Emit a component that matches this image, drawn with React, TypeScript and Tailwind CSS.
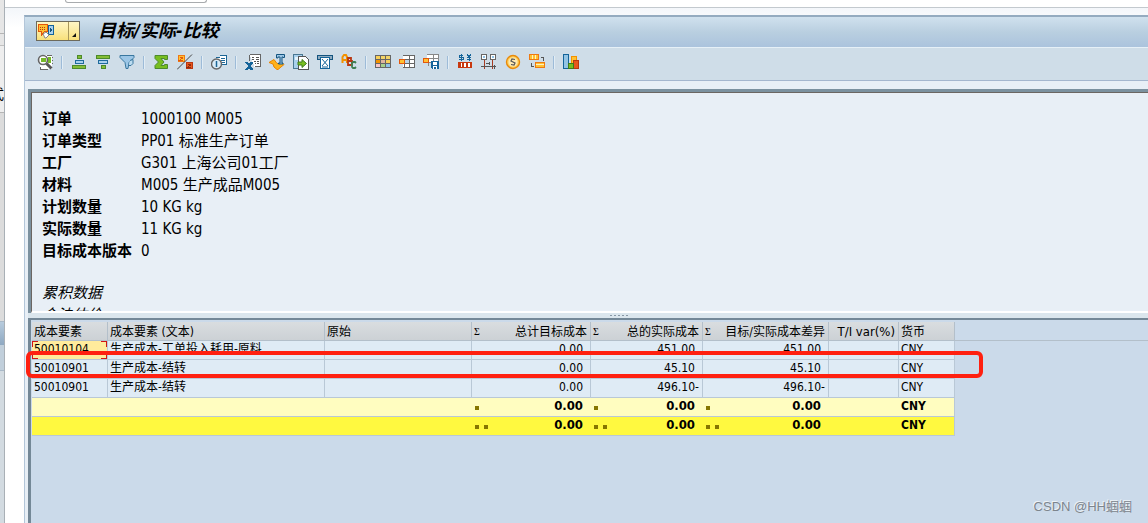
import type { ReactNode } from 'react';
import clsx from 'clsx';

interface OrderField {
  label: string;
  value: string;
}

interface CostRow {
  element: string;
  text: string;
  target: string;
  actual: string;
  variance: string;
  currency: string;
}

const orderFields: OrderField[] = [
  { label: '订单', value: '1000100 M005' },
  { label: '订单类型', value: 'PP01 标准生产订单' },
  { label: '工厂', value: 'G301 上海公司01工厂' },
  { label: '材料', value: 'M005 生产成品M005' },
  { label: '计划数量', value: '10 KG kg' },
  { label: '实际数量', value: '11 KG kg' },
  { label: '目标成本版本', value: '0' },
];

const costRows: CostRow[] = [
  { element: '50010104', text: '生产成本-工单投入耗用-原料', target: '0.00', actual: '451.00', variance: '451.00', currency: 'CNY' },
  { element: '50010901', text: '生产成本-结转', target: '0.00', actual: '45.10', variance: '45.10', currency: 'CNY' },
  { element: '50010901', text: '生产成本-结转', target: '0.00', actual: '496.10-', variance: '496.10-', currency: 'CNY' },
];

const totalRows = [
  { level: 1, bg: 'bg-[#fffdc0]' },
  { level: 2, bg: 'bg-[#fff940]' },
];

function Icon({ children }: { children: ReactNode }) {
  return (
    <svg className="block h-4 w-4" viewBox="0 0 16 16" fill="none" shapeRendering="crispEdges" aria-hidden="true">
      {children}
    </svg>
  );
}

const toolGroups: { name: string; icon: ReactNode }[][] = [
  [
    {
      name: '明细',
      icon: (
        <>
          <path d="M8 1h7v14H3v-4h5z" fill="#fff" />
          <path d="M10 1h5M15 3v1M15 6v1M15 9v1M3 13v2h8" stroke="#666" />
          <path d="M11 3h3v6h-3z" fill="#76b82a" />
          <g shapeRendering="auto">
            <circle cx="6" cy="6" r="4.5" fill="#fff" stroke="#666" strokeWidth="1.6" />
            <path d="M9.5 9.5l5 5" stroke="#555" strokeWidth="3" />
          </g>
          <path d="M4 4h5v4H4z" fill="#76b82a" />
        </>
      ),
    },
  ],
  [
    {
      name: '升序排序',
      icon: (
        <>
          <path d="M6.5 1.5h4v3h-4zM1.5 11.5h13v3h-13z" fill="#84bd35" stroke="#4c8a2b" />
          <path d="M4.5 6.5h8v3h-8z" fill="#a9d0ec" stroke="#1f6b9c" />
        </>
      ),
    },
    {
      name: '降序排序',
      icon: (
        <>
          <path d="M1.5 1.5h13v3h-13zM6.5 11.5h4v3h-4z" fill="#84bd35" stroke="#4c8a2b" />
          <path d="M3.5 6.5h9v3h-9z" fill="#a9d0ec" stroke="#1f6b9c" />
        </>
      ),
    },
    {
      name: '设置过滤器',
      icon: (
        <g shapeRendering="auto">
          <path d="M1 1.5h14v2l-5 5-1 6H7l-1-6-5-5z" fill="#9cc6e6" stroke="#39779f" />
          <path d="M11 6.5l3-1v4l-2 2h-2" fill="#bcdcf0" stroke="#39779f" />
        </g>
      ),
    },
  ],
  [
    {
      name: '总计',
      icon: <path d="M2 1.5h12.5v4h-3v-1H8L11 8l-3 3.5h3.5v-1h3v4H2v-3L5.5 8 2 4.5z" fill="#78be20" stroke="#4c8a2b" shapeRendering="auto" />,
    },
    {
      name: '小计',
      icon: (
        <>
          <path d="M1.5 1.5h6v6h-6z" fill="#ffc233" stroke="#ee7a13" />
          <path d="M9.5 8.5h6v6h-6z" fill="#e8571c" stroke="#b93712" />
          <path d="M6 3H3l2 1.5L3 6h3" stroke="#e4570b" />
          <path d="M14 10h-3l2 1.5-2 1.5h3" stroke="#8f2b0d" />
          <path d="M0 15.5L15 .5" stroke="#444" shapeRendering="auto" />
        </>
      ),
    },
  ],
  [
    {
      name: '打印预览',
      icon: (
        <>
          <path d="M5 3.5h5v6" fill="#fff" stroke="#1c6696" />
          <path d="M8.5 1.5h7v9h-5" fill="#fff" stroke="#1c6696" />
          <path d="M10 4.5h4M10 6.5h4M11 8.5h3" stroke="#1c6696" />
          <g shapeRendering="auto">
            <circle cx="5.5" cy="10" r="5" fill="#d9ecf8" stroke="#666" strokeWidth="1.4" />
            <path d="M5.5 7v6" stroke="#1c6696" strokeWidth="1.5" />
          </g>
        </>
      ),
    },
  ],
  [
    {
      name: '电子表格',
      icon: (
        <>
          <path d="M4.5 .5h11v12h-6M4.5 .5v6" fill="#fff" stroke="#666" />
          <path d="M7 3h2v1H7zM11 3h3v1h-3zM7 5h2v1H7zM11 5h3v1h-3zM9 7h2v1H9zM12 7h2v1h-2zM10 9h1v1h-1zM12 9h2v1h-2z" fill="#555" />
          <path d="M0 8h3l1 2 1-2h3v1L5 12l3 3v1H5l-1-2-1 2H0v-1l3-3-3-3z" fill="#14649a" />
        </>
      ),
    },
    {
      name: '文字处理',
      icon: (
        <g shapeRendering="auto">
          <path d="M0 8.5l5-3 3 4h6l1 1-6 5H8L5 13l-1-3z" fill="#ffb21a" stroke="#e98300" />
          <path d="M7.5 .5h8v3h-1.500V3h-1v6H14v1H9.500V9H11V3H9v1H7.500z" fill="#9cc6e6" stroke="#14547f" />
        </g>
      ),
    },
    {
      name: '本地文件',
      icon: (
        <>
          <path d="M.5 .5h9v14h-9z" fill="#a9d0ec" stroke="#4a7893" />
          <path d="M2 3h5v3H2z" fill="#e5f3fb" />
          <path d="M5.5 2.5h7l3 3v10h-10z" fill="#fff" stroke="#555" />
          <path d="M5 8h4V5.5L13.5 9.5 9 13.5V11H5z" fill="#78be20" stroke="#3f7a1c" shapeRendering="auto" />
        </>
      ),
    },
    {
      name: '发送',
      icon: (
        <>
          <path d="M.5 1.5h15v4H.5z" fill="#8fabc0" stroke="#14547f" />
          <path d="M3.5 3.5h9v11h-9z" fill="#fff" stroke="#14649a" />
          <path d="M5 5l6 7M11 5l-6 7M5 13h6" stroke="#14649a" shapeRendering="auto" />
        </>
      ),
    },
    {
      name: 'ABC 分析',
      icon: (
        <g shapeRendering="auto">
          <path d="M1.5 9V3L3 1h2l1 2v6M1.5 6H6" stroke="#f39200" strokeWidth="2" />
          <path d="M7 4h3v3H7zM7 7h4v4H7z" stroke="#b93712" strokeWidth="1.8" />
          <path d="M15 9l-1-1h-2l-1 1v4l1 1h2l1-1" stroke="#3f7f55" strokeWidth="1.8" />
        </g>
      ),
    },
  ],
  [
    {
      name: '当前格式',
      icon: (
        <>
          <path d="M0 1h16v13H0z" fill="#666" />
          <path d="M1 2h4v3H1zM11 6h4v3h-4z" fill="#f9d057" />
          <path d="M6 2h4v3H6zM11 2h4v3h-4z" fill="#f3d468" />
          <path d="M1 6h4v3H1z" fill="#f39200" />
          <path d="M6 6h4v3H6z" fill="#e0b59e" />
          <path d="M1 10h4v3H1z" fill="#f9c6c6" />
          <path d="M6 10h4v3H6z" fill="#a7d08c" />
          <path d="M11 10h4v3h-4z" fill="#8fc3e8" />
        </>
      ),
    },
    {
      name: '选择格式',
      icon: (
        <>
          <path d="M4 1h12v13H4z" fill="#fff" />
          <path d="M4 1.5h12M6 5.5h10M6 9.5h10M4 13.5h12M10.5 1v13M15.5 1v13M5.5 10v4" stroke="#666" />
          <path d="M.5 5.5h5v4h-5z" fill="#ffc233" stroke="#e4570b" />
          <path d="M6 6h4v3H6z" fill="#b8d5ea" />
        </>
      ),
    },
    {
      name: '保存格式',
      icon: (
        <>
          <path d="M4 0h12v9H4z" fill="#fff" />
          <path d="M4 .5h12M6 4.5h10M6 8.5h3M10.5 0v7M15.5 0v7M5.5 9v3" stroke="#888" />
          <path d="M.5 4.5h5v4h-5z" fill="#ffc233" stroke="#e4570b" />
          <path d="M8 7h8v8H9l-1-1z" fill="#14649a" />
          <path d="M10 8h4v3h-4zM10 12h4v3h-1v-2h-2v2h-1z" fill="#fff" />
        </>
      ),
    },
  ],
  [
    {
      name: '货币',
      icon: (
        <>
          <path d="M6 1.5H2v2h4v2H2M4 0v7M10 0l2 3 2-3M12 3v4M10 3.5h4M10 5.5h4" stroke="#14649a" />
          <path d="M1.5 8.5h13v5h-13z" fill="#c8380f" stroke="#c8380f" />
          <path d="M4.5 9v4M7.5 9.5h1v3h-1zM11.5 9.5h1v3h-1z" stroke="#fff" />
        </>
      ),
    },
    {
      name: '期间',
      icon: (
        <>
          <path d="M.5 .5h5v5h-5zM9.5 .5h5v5h-5z" fill="#fff" stroke="#666" />
          <path d="M2 2h2v2H2zM11 2h2v2h-2z" fill="#8fc3e8" />
          <path d="M3.5 6v9M11.5 6v9" stroke="#a83c22" />
          <path d="M5 9.5h4M8.5 8v3M0 12.5h15M13.5 10.5v4" stroke="#555" />
        </>
      ),
    },
    {
      name: '成本',
      icon: (
        <g shapeRendering="auto">
          <circle cx="8" cy="8" r="6.5" fill="#ffd25e" stroke="#e88a0c" strokeWidth="1.4" />
          <circle cx="8" cy="8" r="4.5" fill="#ffe9b0" />
          <path d="M10 5.5L7 5 6 7l4 2-1 2-3-.5" stroke="#555" strokeWidth="1.2" />
        </g>
      ),
    },
    {
      name: '转换',
      icon: (
        <>
          <path d="M.5 .5h9v5h-9zM6.5 8.5h9v5h-9z" fill="#ffc233" stroke="#ee7a13" />
          <path d="M3.5 1v4M6.500 1v4M7 10.5h8" stroke="#fff1c4" />
          <path d="M12 3.5h2.5V7M2.5 9v3.5H5" stroke="#555" />
        </>
      ),
    },
  ],
  [
    {
      name: '图形',
      icon: (
        <>
          <path d="M.5 .5h5v14h-5z" fill="#94c4e4" stroke="#14649a" />
          <path d="M8.5 2.5h5v11h-5z" fill="#ffc233" stroke="#f39200" />
          <path d="M10.5 6.5h5v8h-5z" fill="#e8571c" stroke="#b93712" />
          <path d="M5.5 9.5h5v5h-5z" fill="#78be20" stroke="#3f7a1c" />
        </>
      ),
    },
  ],
];

function ParentWindowEdge() {
  return (
    <div className="flex w-[5px] shrink-0 flex-col border-r border-[#a9b0b6] bg-[#d9dadb]">
      <div className="h-[34px] border-b border-[#b5b5b5] bg-[#e6e6e6]" />
      <div className="h-3 border-b border-[#c0c0c0] bg-[#e6e6e6]" />
      <div className="flex h-[67px] items-end justify-end overflow-hidden border-b border-[#b5b5b5] bg-[#eeeeee] pb-2 text-sm">
        <span>式</span>
      </div>
      <div className="h-[208px] bg-[#dcdcdc]" />
      <div className="h-6 border-t border-[#a9b9c8] bg-linear-to-b from-[#b7cbdd] to-[#8fa9c2]" />
      <div className="h-[26px] border-b border-[#a9b9c8] bg-[#c1cfdb]" />
      <div className="grow bg-[#d3dbe1]" />
    </div>
  );
}

function TitleBar() {
  return (
    <div className="flex h-[31px] items-center border-b border-[#e6f0f7] bg-linear-to-b from-[#d0e1ee] via-[#b9cfe0] to-[#abc3dd] pb-0.5 pl-[11px]">
      <button
        type="button"
        aria-label="菜单"
        className="flex h-5 w-11 items-stretch border border-[#6d6a5c] bg-linear-to-b from-[#fff6c4] to-[#f8e07a]"
      >
        <span className="flex w-8 items-center border-r border-[#a8975a] pl-px">
          <Icon>
            <path d="M.5 1.5h9v7h-3l-3 4v-4h-3z" fill="#ffc233" stroke="#e4570b" />
            <path d="M2 4h1v1H2zM4 4h1v1H4zM6 4h1v1H6zM2 6h1v1H2zM4 6h1v1H4zM6 6h1v1H6z" fill="#b93712" />
            <path d="M10.5 2.5h5v9h-5z" fill="#a9d0ec" stroke="#14649a" />
            <path d="M12 5l2 2-2 2z" fill="#14547f" />
            <path d="M5 11l3-2 3 3-3 3H7z" fill="#fff" stroke="#888" shapeRendering="auto" />
          </Icon>
        </span>
        <span className="flex grow items-end justify-end p-[3px]">
          <svg className="h-1 w-1" viewBox="0 0 4 4" aria-hidden="true">
            <path d="M4 0v4H0z" fill="#111" />
          </svg>
        </span>
      </button>
      <h1 className="ml-[18px] text-[18px] leading-6 font-bold italic">目标/实际-比较</h1>
    </div>
  );
}

function Toolbar() {
  return (
    <div role="toolbar" className="flex h-[33px] items-center gap-2 border-b border-[#a4b6ce] bg-[#cfdde8] pb-1 pl-3">
      {toolGroups.map((group, i) => (
        <div key={group[0].name} className="flex items-center gap-2">
          {i > 0 && <span className="h-[13px] w-0.5 border-r border-[#e2edf5] bg-[#9dbbd8]" />}
          {group.map((tool) => (
            <button key={tool.name} type="button" aria-label={tool.name}>
              <Icon>{tool.icon}</Icon>
            </button>
          ))}
        </div>
      ))}
    </div>
  );
}

function OrderHeader() {
  return (
    <section className="border-t-[3px] border-l-[3px] border-[#7b919f]">
      <div className="h-[221px] overflow-hidden border-t border-b-2 border-l border-t-[#6b6662] border-b-white border-l-[#6b6662] bg-[#e8eff6] pt-[15px] pl-[10px] text-[15px] leading-[22px]">
        <dl className="grid grid-cols-[99px_1fr]">
          {orderFields.map((field) => (
            <div key={field.label} className="contents">
              <dt className="font-bold whitespace-nowrap">{field.label}</dt>
              <dd>{field.value}</dd>
            </div>
          ))}
        </dl>
        <div className="pt-5 italic">
          <p>累积数据</p>
          <p>合法估价</p>
        </div>
      </div>
    </section>
  );
}

function SumHeader({ children }: { children: ReactNode }) {
  return (
    <div className="flex items-center justify-between">
      <span className="font-['Liberation_Serif',serif] text-[10px] leading-3">Σ</span>
      {children}
    </div>
  );
}

// The last slot is kept free for a trailing minus sign
function Amount({ value }: { value: string }) {
  const negative = value.endsWith('-');
  return (
    <>
      {negative ? value.slice(0, -1) : value}
      <span className="inline-block w-1 text-left">{negative && '-'}</span>
    </>
  );
}

function TotalCell({ level, bg }: { level: number; bg: string }) {
  return (
    <td className={clsx('border-b border-[#b9c8d6] p-0 pr-2 pb-0.5 pl-[3px]', bg)}>
      <div className="flex items-center justify-between">
        <span className="flex gap-[5px] pt-1">
          {Array.from({ length: level }, (_, i) => (
            <i key={i} className="h-1 w-1 bg-[#857600]" />
          ))}
        </span>
        <span className="text-[13px] leading-4">0.00</span>
      </div>
    </td>
  );
}

const headCell = 'h-[19px] border-r border-b border-[#b3bfca] bg-linear-to-b from-[#d9dde0] to-[#ccd1d5] p-0 pt-0.5 pr-[3px] pl-0.5 font-normal';
const bodyCell = 'h-[19px] border-r border-b border-[#b9c8d6] p-0 pr-[3px] pb-0.5 pl-0.5';

function CostTable() {
  return (
    <div className="relative">
      <table className="w-full table-fixed border-separate border-spacing-0 text-left text-xs leading-4 whitespace-nowrap">
        <colgroup>
          <col className="w-[76px]" />
          <col className="w-[217px]" />
          <col className="w-[147px]" />
          <col className="w-[119px]" />
          <col className="w-[112px]" />
          <col className="w-[126px]" />
          <col className="w-[70px]" />
          <col className="w-[56px]" />
          <col />
        </colgroup>
        <thead>
          <tr>
            <th className={headCell}>成本要素</th>
            <th className={headCell}>成本要素 (文本)</th>
            <th className={headCell}>原始</th>
            <th className={headCell}><SumHeader>总计目标成本</SumHeader></th>
            <th className={headCell}><SumHeader>总的实际成本</SumHeader></th>
            <th className={headCell}><SumHeader>目标/实际成本差异</SumHeader></th>
            <th className={clsx(headCell, 'text-right text-[13px] leading-4')}>T/I var(%)</th>
            <th className={headCell}>货币</th>
            <td className="border-b border-[#b3bfca]" />
          </tr>
        </thead>
        <tbody>
          {costRows.map((row, i) => (
            <tr key={i} className="bg-[#dfebf5]">
              <td className={clsx(bodyCell, i === 0 && 'relative bg-[#ffeb9c]')}>
                {i === 0 && (
                  <>
                    <span className="absolute top-0 left-0 h-1.5 w-1.5 border-t border-l border-[#d01515]" />
                    <span className="absolute top-0 right-0 h-1.5 w-1.5 border-t border-r border-[#d01515]" />
                    <span className="absolute bottom-0 left-0 h-1.5 w-1.5 border-b border-l border-[#d01515]" />
                    <span className="absolute right-0 bottom-0 h-1.5 w-1.5 border-r border-b border-[#d01515]" />
                  </>
                )}
                {row.element}
              </td>
              <td className={bodyCell}>{row.text}</td>
              <td className={bodyCell} />
              <td className={clsx(bodyCell, 'text-right')}><Amount value={row.target} /></td>
              <td className={clsx(bodyCell, 'text-right')}><Amount value={row.actual} /></td>
              <td className={clsx(bodyCell, 'text-right')}><Amount value={row.variance} /></td>
              <td className={bodyCell} />
              <td className={bodyCell}>{row.currency}</td>
              <td className="bg-[#cbdaea]" />
            </tr>
          ))}
          {totalRows.map((row) => (
            <tr key={row.level} className="font-bold">
              <td colSpan={3} className={clsx('h-[19px] border-b border-[#b9c8d6] p-0', row.bg)} />
              <TotalCell level={row.level} bg={row.bg} />
              <TotalCell level={row.level} bg={row.bg} />
              <TotalCell level={row.level} bg={row.bg} />
              <td className={clsx('border-b border-[#b9c8d6] p-0', row.bg)} />
              <td className={clsx(bodyCell, row.bg)}>CNY</td>
            </tr>
          ))}
        </tbody>
      </table>
      {/* Red marker around the second line */}
      <div className="pointer-events-none absolute top-[29px] -left-1.5 h-[27px] w-[957px] rounded-md border-4 border-[#ff2010]" />
    </div>
  );
}

export default function App() {
  return (
    <div className="relative flex min-h-screen overflow-hidden bg-white font-['DejaVu_Sans_Condensed','Noto_Sans_CJK_SC',sans-serif] text-black">
      <ParentWindowEdge />
      <div className="flex min-w-0 grow flex-col">
        <div className="h-2 border-b border-[#c3c9ce] pl-[60px]">
          <div className="h-[3px] w-[142px] rounded-b-sm border border-t-0 border-[#a8abae]" />
        </div>
        <div className="flex grow flex-col bg-linear-to-b from-[#f3f6fa] to-white to-[20px] pt-[7px] pl-[19px]">
          <main className="flex grow flex-col border-t-2 border-l border-t-[#94abc0] border-l-[#b3c6d9] bg-[#e8eff6]">
            <TitleBar />
            <Toolbar />
            <div className="flex grow flex-col pt-2 pl-[3px]">
              <OrderHeader />
              <div className="flex h-[5px] items-center justify-center gap-0.5 bg-[#dbe6ed] pr-[3px] pl-16">
                {[0, 1, 2, 3, 4].map((n) => (
                  <i key={n} className="h-px w-0.5 bg-[#8797a5]" />
                ))}
              </div>
              <section className="grow border-t-2 border-l-[3px] border-[#748897] bg-[#cbdaea] pt-0.5 pl-px">
                <CostTable />
              </section>
            </div>
          </main>
        </div>
      </div>
      <p className="absolute right-4 bottom-2 font-['Liberation_Sans','Noto_Sans_CJK_SC',sans-serif] text-[13px] leading-4 text-[#7d858d] [text-shadow:-1px_-1px_0_#eef3f8]">
        CSDN @HH蝈蝈
      </p>
    </div>
  );
}
